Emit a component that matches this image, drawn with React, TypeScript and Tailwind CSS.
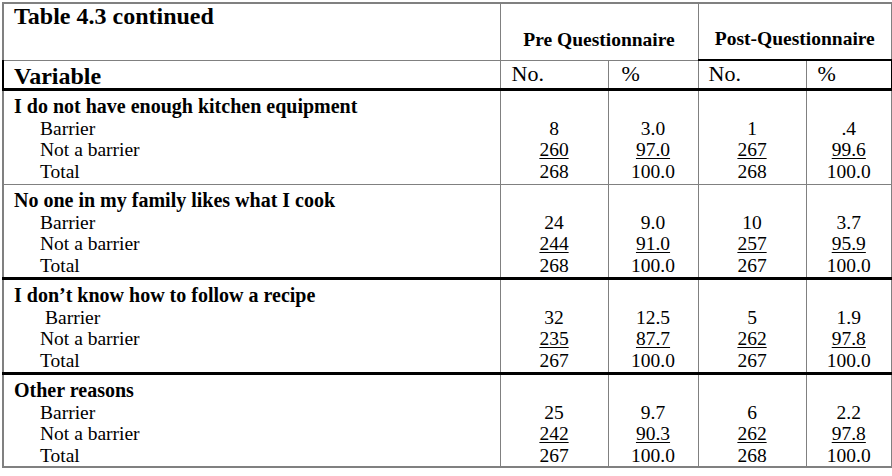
const sections = [
  {
    title: "I do not have enough kitchen equipment",
    rows: [
      ["8", "3.0", "1", ".4"],
      ["260", "97.0", "267", "99.6"],
      ["268", "100.0", "268", "100.0"],
    ],
    thick: false,
    shift: false,
    h: "h-[95px]",
  },
  {
    title: "No one in my family likes what I cook",
    rows: [
      ["24", "9.0", "10", "3.7"],
      ["244", "91.0", "257", "95.9"],
      ["268", "100.0", "267", "100.0"],
    ],
    thick: false,
    shift: false,
    h: "h-[94px]",
  },
  {
    title: "I don’t know how to follow a recipe",
    rows: [
      ["32", "12.5", "5", "1.9"],
      ["235", "87.7", "262", "97.8"],
      ["267", "100.0", "267", "100.0"],
    ],
    thick: true,
    shift: true,
    h: "h-[95px]",
  },
  {
    title: "Other reasons",
    rows: [
      ["25", "9.7", "6", "2.2"],
      ["242", "90.3", "262", "97.8"],
      ["267", "100.0", "268", "100.0"],
    ],
    thick: true,
    shift: false,
    h: "h-[94px]",
  },
];

const labels = ["Barrier", "Not a barrier", "Total"];

export default function App() {
  return (
    <div className="w-[892px] h-[476px] bg-white pt-[2px] pl-[2px] font-['Liberation_Serif',serif] text-black">
      <table className="table-fixed border-collapse w-[889px] border-2 border-[#808080]">
        <colgroup>
          <col className="w-[497px]" />
          <col className="w-[108px]" />
          <col className="w-[90px]" />
          <col className="w-[108px]" />
          <col className="w-[86px]" />
        </colgroup>
        <thead>
          <tr className="h-[57px]">
            <th className="border border-[#808080] align-top text-left pl-[10px] pt-0 text-[24px] font-bold leading-[25px]">
              Table 4.3 continued
            </th>
            <th
              colSpan={2}
              className="border border-[#808080] align-bottom pb-[9px] text-[19.5px] font-bold leading-[22px]"
            >
              Pre Questionnaire
            </th>
            <th
              colSpan={2}
              className="border border-[#808080] align-bottom pb-[9px] text-[19.5px] font-bold leading-[22px]"
            >
              Post-Questionnaire
            </th>
          </tr>
          <tr className="h-[29px]">
            <th className="border border-[#808080] border-l-2 border-l-black border-b-[3px] border-b-black text-left pl-[10px] pt-[3px] text-[24px] font-bold leading-[22px]">
              Variable
            </th>
            <th className="border border-[#808080] border-b-[3px] border-b-black text-left pl-[11px] text-[22px] font-normal leading-[22px]">
              No.
            </th>
            <th className="border border-[#808080] border-b-[3px] border-b-black text-left pl-[13px] text-[22px] font-normal leading-[22px]">
              %
            </th>
            <th className="border border-[#808080] border-t-2 border-t-black border-b-[3px] border-b-black text-left pl-[10px] text-[22px] font-normal leading-[22px]">
              No.
            </th>
            <th className="border border-[#808080] border-t-2 border-t-black border-r-2 border-r-black border-b-[3px] border-b-black text-left pl-[11px] text-[22px] font-normal leading-[22px]">
              %
            </th>
          </tr>
        </thead>
        <tbody>
          {sections.map((s) => (
            <tr key={s.title} className={s.h}>
              <td
                className={`border border-[#808080] align-top pl-[10px] pt-[3px] ${
                  s.thick ? "border-t-[3px] border-t-black" : ""
                }`}
              >
                <div className="text-[20px] font-bold leading-[24px]">{s.title}</div>
                {labels.map((l, i) => (
                  <div
                    key={l}
                    className={`text-[19.5px] leading-[21.5px] ${
                      i === 0 && s.shift ? "pl-[31px]" : "pl-[26px]"
                    }`}
                  >
                    {l}
                  </div>
                ))}
              </td>
              {[0, 1, 2, 3].map((c) => (
                <td
                  key={c}
                  className={`border border-[#808080] align-top pt-[27px] text-center text-[19.5px] leading-[21.5px] ${
                    s.thick ? "border-t-[3px] border-t-black" : ""
                  }`}
                >
                  <div>{s.rows[0][c]}</div>
                  <div>
                    <span className="underline decoration-1 underline-offset-[2px]">{s.rows[1][c]}</span>
                  </div>
                  <div>{s.rows[2][c]}</div>
                </td>
              ))}
            </tr>
          ))}
        </tbody>
      </table>
    </div>
  );
}
